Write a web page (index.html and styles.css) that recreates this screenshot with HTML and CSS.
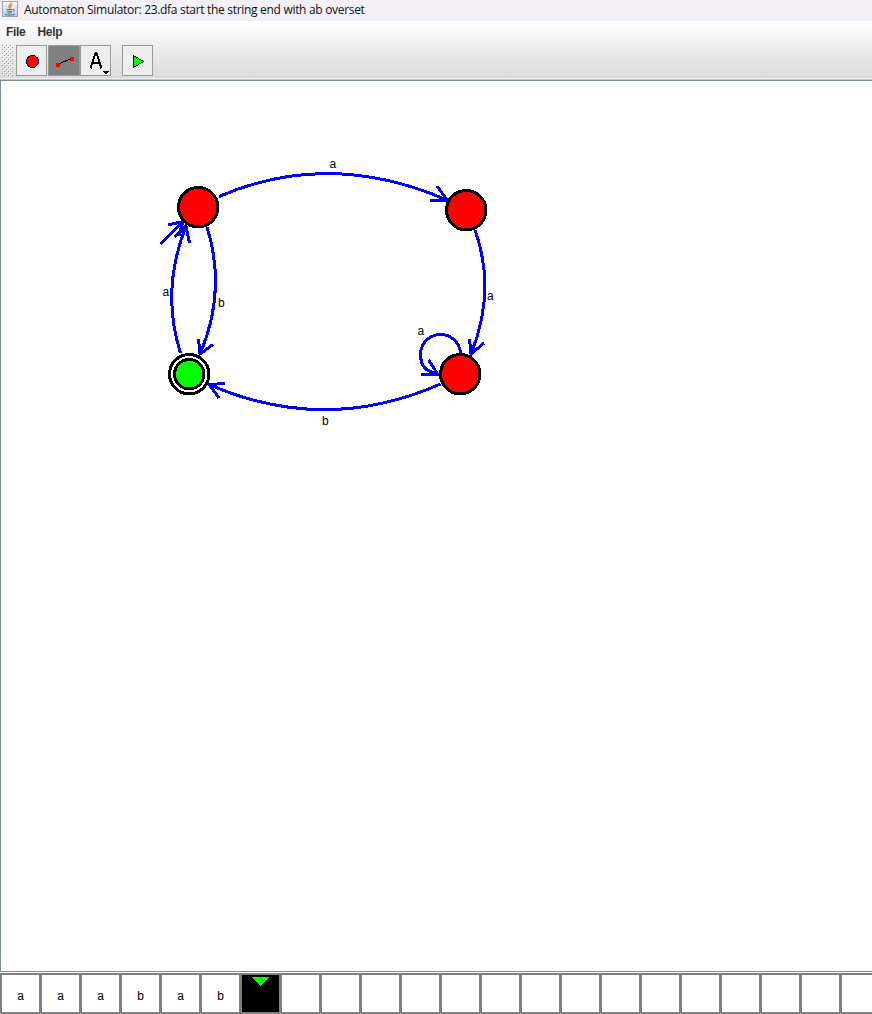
FILE: index.html
```
<!DOCTYPE html>
<html lang="en">
<head>
<meta charset="utf-8">
<title>Automaton Simulator</title>
<link rel="stylesheet" href="styles.css">
</head>
<body>
<div class="window">
  <header class="titlebar">
    <svg class="app-icon" width="16" height="16" viewBox="0 0 16 16">
      <defs><linearGradient id="cup" x1="0" y1="0" x2="0" y2="1"><stop offset="0" stop-color="#fafafa"/><stop offset="1" stop-color="#b9cbd8"/></linearGradient></defs>
      <rect x=".5" y=".5" width="15" height="15" fill="url(#cup)" stroke="#94a5b3"/>
      <path d="M9.2 1.5C10 3.5 6 4.200 7 6c.3.700.7 1 .8 1.800M10.500 4C8.500 5 8.300 5.500 9 6.500" fill="none" stroke="#e77b24" stroke-width="1.300"/>
      <path d="M4.500 8.500h6M5 10.300h5M5.500 12h4M11 8.500c2-.5 1.800 1.800-.2 2.300M3 13.500c3 1 8 .8 10-.3" fill="none" stroke="#46718f" stroke-width="1"/>
    </svg>
    <span class="title">Automaton Simulator: 23.dfa start the string end with ab overset</span>
  </header>
  <div class="chrome">
    <nav class="menu"><span>File</span><span>Help</span></nav>
    <div class="toolbar">
      <svg class="grip" width="11" height="32" shape-rendering="crispEdges">
        <defs><pattern id="dots" width="4" height="4" patternUnits="userSpaceOnUse"><path d="M0 0h1v1H0zM2 2h1v1H2z" fill="#999"/><path d="M1 1h1v1H1zM3 3h1v1H3z" fill="#fff"/></pattern></defs>
        <rect width="11" height="32" fill="url(#dots)"/>
      </svg>
      <button class="tool state"><svg width="29" height="29" shape-rendering="crispEdges"><circle cx="15.500" cy="15.500" r="6" fill="red" stroke="#000"/></svg></button>
      <button class="tool edge"><svg width="29" height="29" shape-rendering="crispEdges"><path d="M8 19L23 12" stroke="#000"/><path d="M7 17h4v4H7zM21 11h4v4h-4z" fill="red"/></svg></button>
      <button class="tool label"><svg width="29" height="29" shape-rendering="crispEdges"><path d="M9.500 22.500L14.500 7h1L20.500 22.500M11.500 17h7" fill="none" stroke="#000" stroke-width="2"/><path d="M22 25h6v1h-1v1h-1v1h-2v-1h-1v-1h-1z"/></svg></button>
      <button class="tool play"><svg width="29" height="29" shape-rendering="crispEdges"><path d="M10.500 9.500v12L20.500 15.500z" fill="#0f0" stroke="#000"/></svg></button>
    </div>
  </div>
  <main class="canvas">
    <svg class="graph" width="871" height="890" viewBox="1 81 871 890" shape-rendering="crispEdges">
      <g class="edges">
        <path d="M219 196.500Q329 149 447 200M437 186L447 200L430 201"/>
        <path d="M475 230Q496.500 291 471 354M469.500 339L471 354L484 343"/>
        <path d="M440.500 384Q325 435 209 384.500M225 383.500L209 384.500L219 398"/>
        <path d="M207 227Q227 291 200 354M198.500 339L200 354L213 344.500"/>
        <path d="M180.500 353Q160.500 291 186 226M174.500 237L186 226L189.500 243"/>
        <path d="M160.500 244L183 221.500M168 225L183 221.500L179 236"/>
        <path d="M460.500 353A20 20 0 0 0 440 334.500A20 20 0 0 0 420.500 354Q420.500 369 432 372L438 374.500M428.500 360L438 374.500H421"/>
      </g>
      <g class="states">
        <circle cx="198.200" cy="207.200" r="19.700"/>
        <circle cx="466.200" cy="210.200" r="19.700"/>
        <circle cx="460.200" cy="374.200" r="19.700"/>
        <circle class="ring" cx="189.200" cy="374.200" r="19.700"/>
        <circle class="accept" cx="189.200" cy="374.200" r="14.700"/>
      </g>
      <g class="names">
        <text x="329.500" y="168">a</text><text x="487" y="300">a</text><text x="417.500" y="335">a</text>
        <text x="162.500" y="296">a</text><text x="218" y="307">b</text><text x="322" y="425">b</text>
      </g>
    </svg>
  </main>
  <footer class="tape">
    <div class="cell">a</div><div class="cell">a</div><div class="cell">a</div><div class="cell">b</div><div class="cell">a</div><div class="cell">b</div>
    <div class="cell head"><svg width="17" height="9" shape-rendering="crispEdges"><path d="M0 0h17L8.500 9z" fill="#0f0"/></svg></div>
    <div class="cell"></div><div class="cell"></div><div class="cell"></div><div class="cell"></div><div class="cell"></div><div class="cell"></div><div class="cell"></div><div class="cell"></div><div class="cell"></div><div class="cell"></div><div class="cell"></div><div class="cell"></div><div class="cell"></div><div class="cell"></div><div class="cell"></div>
  </footer>
</div>
</body>
</html>
```
FILE: styles.css
```
* { box-sizing: border-box; }
body { margin: 0; background: #fff; overflow: hidden; }
.window { width: 872px; height: 1014px; display: flex; flex-direction: column; overflow: hidden; }
.titlebar { height: 21px; flex: none; display: flex; align-items: flex-start; gap: 6px; padding: 1px 0 0 2px; background: #f3f0f8; }
.app-icon { display: block; }
.title { font: 12px/18px "Open Sans", sans-serif; letter-spacing: -0.31px; white-space: nowrap; color: #111; }
.chrome { height: 59px; flex: none; background: linear-gradient(#fff, #dadada); border-bottom: 1px solid #c5c5c5; box-shadow: inset 0 -1px #eee; }
.menu { height: 22px; display: flex; gap: 12px; padding-left: 6px; font: bold 12px/22px "Liberation Sans", sans-serif; letter-spacing: -0.3px; color: #333; }
.toolbar { display: flex; align-items: flex-start; padding: 2px 0 0 2px; }
.grip { display: block; margin-right: 3px; }
.tool { width: 31px; height: 31px; padding: 0; border: 1px solid #999; background: #eee; }
.tool svg { display: block; }
.edge { width: 32px; margin-left: 1px; background: #808080; }
.play { margin-left: 11px; }
.canvas { height: 892px; flex: none; border: 1px solid #7a8a99; border-right: 0; background: #fff; }
.graph { display: block; }
.edges path { fill: none; stroke: #00f; stroke-width: 3; }
.states circle { fill: red; stroke: #000; stroke-width: 3; }
.states .ring { fill: #fff; }
.states .accept { fill: #0f0; }
.names text { font: 12px "Liberation Sans", sans-serif; fill: #000; }
.tape { height: 41px; margin-top: 1px; flex: none; display: flex; padding-left: 2px; border-top: 2px solid #808080; border-bottom: 2px solid #808080; background: linear-gradient(90deg, #808080 2px, #fff 2px); font: 12px/42px "Liberation Sans", sans-serif; }
.cell { width: 40px; height: 37px; flex: none; border-right: 3px solid #808080; text-align: center; background: #fff; }
.head { background: #000; display: flex; justify-content: center; padding-top: 2px; }
.cell svg { display: block; }
```
